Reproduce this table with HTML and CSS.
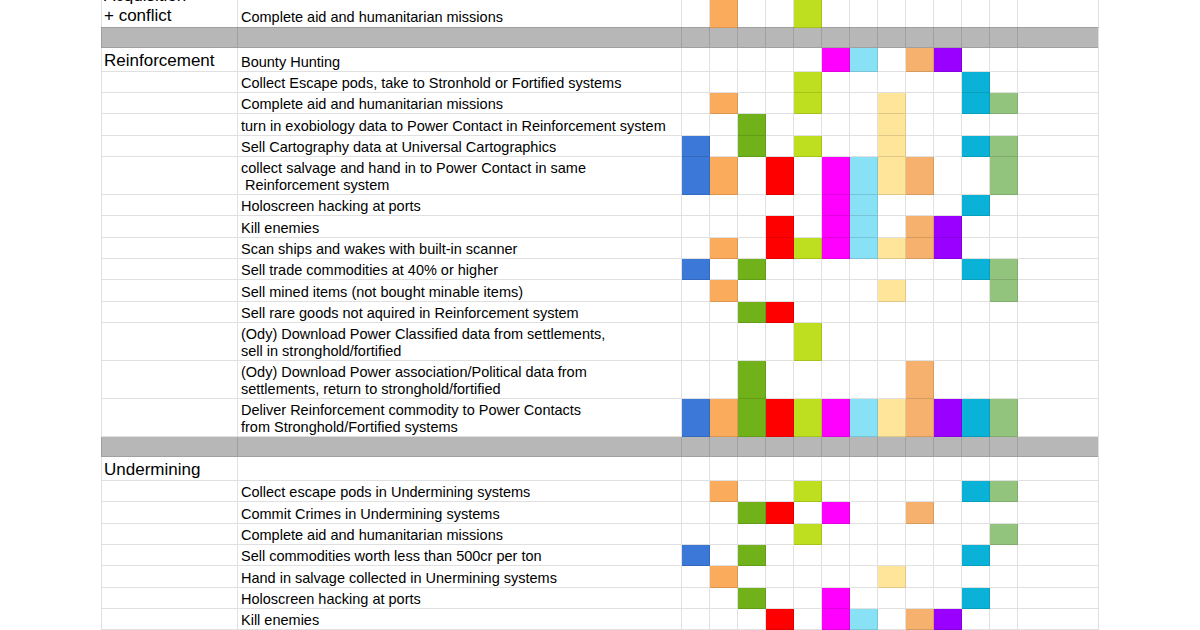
FILE: index.html
```html
<!DOCTYPE html>
<html lang="en">
<head>
<meta charset="utf-8">
<title>Powerplay activities</title>
<link rel="stylesheet" href="styles.css">
</head>
<body>
<div class="sheet">
  <div class="row top"><div class="a"><span>Acquisition<br>+ conflict</span></div><div class="b"><span>Complete aid and humanitarian missions</span></div><i></i><i class="c2"></i><i></i><i></i><i class="c5"></i><i></i><i></i><i></i><i></i><i></i><i></i><i></i><i class="z"></i></div>
  <div class="row gap"><div class="a"></div><div class="b"></div><i></i><i></i><i></i><i></i><i></i><i></i><i></i><i></i><i></i><i></i><i></i><i></i><i class="z"></i></div>

  <div class="row head"><div class="a"><span>Reinforcement</span></div><div class="b"><span>Bounty Hunting</span></div><i></i><i></i><i></i><i></i><i></i><i class="c6"></i><i class="c7"></i><i></i><i class="c9"></i><i class="c10"></i><i></i><i></i><i class="z"></i></div>
  <div class="row"><div class="a"></div><div class="b"><span>Collect Escape pods, take to Stronhold or Fortified systems</span></div><i></i><i></i><i></i><i></i><i class="c5"></i><i></i><i></i><i></i><i></i><i></i><i class="c11"></i><i></i><i class="z"></i></div>
  <div class="row"><div class="a"></div><div class="b"><span>Complete aid and humanitarian missions</span></div><i></i><i class="c2"></i><i></i><i></i><i class="c5"></i><i></i><i></i><i class="c8"></i><i></i><i></i><i class="c11"></i><i class="c12"></i><i class="z"></i></div>
  <div class="row"><div class="a"></div><div class="b"><span>turn in exobiology data to Power Contact in Reinforcement system</span></div><i></i><i></i><i class="c3"></i><i></i><i></i><i></i><i></i><i class="c8"></i><i></i><i></i><i></i><i></i><i class="z"></i></div>
  <div class="row"><div class="a"></div><div class="b"><span>Sell Cartography data at Universal Cartographics</span></div><i class="c1"></i><i></i><i class="c3"></i><i></i><i class="c5"></i><i></i><i></i><i class="c8"></i><i></i><i></i><i class="c11"></i><i class="c12"></i><i class="z"></i></div>
  <div class="row dbl"><div class="a"></div><div class="b"><span>collect salvage and hand in to Power Contact in same<br>&nbsp;Reinforcement system</span></div><i class="c1"></i><i class="c2"></i><i></i><i class="c4"></i><i></i><i class="c6"></i><i class="c7"></i><i class="c8"></i><i class="c9"></i><i></i><i></i><i class="c12"></i><i class="z"></i></div>
  <div class="row"><div class="a"></div><div class="b"><span>Holoscreen hacking at ports</span></div><i></i><i></i><i></i><i></i><i></i><i class="c6"></i><i class="c7"></i><i></i><i></i><i></i><i class="c11"></i><i></i><i class="z"></i></div>
  <div class="row"><div class="a"></div><div class="b"><span>Kill enemies</span></div><i></i><i></i><i></i><i class="c4"></i><i></i><i class="c6"></i><i class="c7"></i><i></i><i class="c9"></i><i class="c10"></i><i></i><i></i><i class="z"></i></div>
  <div class="row"><div class="a"></div><div class="b"><span>Scan ships and wakes with built-in scanner</span></div><i></i><i class="c2"></i><i></i><i class="c4"></i><i class="c5"></i><i class="c6"></i><i class="c7"></i><i class="c8"></i><i class="c9"></i><i class="c10"></i><i></i><i></i><i class="z"></i></div>
  <div class="row"><div class="a"></div><div class="b"><span>Sell trade commodities at 40% or higher</span></div><i class="c1"></i><i></i><i class="c3"></i><i></i><i></i><i></i><i></i><i></i><i></i><i></i><i class="c11"></i><i class="c12"></i><i class="z"></i></div>
  <div class="row"><div class="a"></div><div class="b"><span>Sell mined items (not bought minable items)</span></div><i></i><i class="c2"></i><i></i><i></i><i></i><i></i><i></i><i class="c8"></i><i></i><i></i><i></i><i class="c12"></i><i class="z"></i></div>
  <div class="row"><div class="a"></div><div class="b"><span>Sell rare goods not aquired in Reinforcement system</span></div><i></i><i></i><i class="c3"></i><i class="c4"></i><i></i><i></i><i></i><i></i><i></i><i></i><i></i><i></i><i class="z"></i></div>
  <div class="row dbl"><div class="a"></div><div class="b"><span>(Ody) Download Power Classified data from settlements,<br>sell in stronghold/fortified</span></div><i></i><i></i><i></i><i></i><i class="c5"></i><i></i><i></i><i></i><i></i><i></i><i></i><i></i><i class="z"></i></div>
  <div class="row dbl"><div class="a"></div><div class="b"><span>(Ody) Download Power association/Political data from<br>settlements, return to stronghold/fortified</span></div><i></i><i></i><i class="c3"></i><i></i><i></i><i></i><i></i><i></i><i class="c9"></i><i></i><i></i><i></i><i class="z"></i></div>
  <div class="row dbl"><div class="a"></div><div class="b"><span>Deliver Reinforcement commodity to Power Contacts<br>from Stronghold/Fortified systems</span></div><i class="c1"></i><i class="c2"></i><i class="c3"></i><i class="c4"></i><i class="c5"></i><i class="c6"></i><i class="c7"></i><i class="c8"></i><i class="c9"></i><i class="c10"></i><i class="c11"></i><i class="c12"></i><i class="z"></i></div>
  <div class="row gap gap2"><div class="a"></div><div class="b"></div><i></i><i></i><i></i><i></i><i></i><i></i><i></i><i></i><i></i><i></i><i></i><i></i><i class="z"></i></div>

  <div class="row head"><div class="a"><span>Undermining</span></div><div class="b"></div><i></i><i></i><i></i><i></i><i></i><i></i><i></i><i></i><i></i><i></i><i></i><i></i><i class="z"></i></div>
  <div class="row"><div class="a"></div><div class="b"><span>Collect escape pods in Undermining systems</span></div><i></i><i class="c2"></i><i></i><i></i><i class="c5"></i><i></i><i></i><i></i><i></i><i></i><i class="c11"></i><i class="c12"></i><i class="z"></i></div>
  <div class="row"><div class="a"></div><div class="b"><span>Commit Crimes in Undermining systems</span></div><i></i><i></i><i class="c3"></i><i class="c4"></i><i></i><i class="c6"></i><i></i><i></i><i class="c9"></i><i></i><i></i><i></i><i class="z"></i></div>
  <div class="row"><div class="a"></div><div class="b"><span>Complete aid and humanitarian missions</span></div><i></i><i></i><i></i><i></i><i class="c5"></i><i></i><i></i><i></i><i></i><i></i><i></i><i class="c12"></i><i class="z"></i></div>
  <div class="row"><div class="a"></div><div class="b"><span>Sell commodities worth less than 500cr per ton</span></div><i class="c1"></i><i></i><i class="c3"></i><i></i><i></i><i></i><i></i><i></i><i></i><i></i><i class="c11"></i><i></i><i class="z"></i></div>
  <div class="row"><div class="a"></div><div class="b"><span>Hand in salvage collected in Unermining systems</span></div><i></i><i class="c2"></i><i></i><i></i><i></i><i></i><i></i><i class="c8"></i><i></i><i></i><i></i><i></i><i class="z"></i></div>
  <div class="row"><div class="a"></div><div class="b"><span>Holoscreen hacking at ports</span></div><i></i><i></i><i class="c3"></i><i></i><i></i><i class="c6"></i><i></i><i></i><i></i><i></i><i class="c11"></i><i></i><i class="z"></i></div>
  <div class="row"><div class="a"></div><div class="b"><span>Kill enemies</span></div><i></i><i></i><i></i><i class="c4"></i><i></i><i class="c6"></i><i class="c7"></i><i></i><i class="c9"></i><i class="c10"></i><i></i><i></i><i class="z"></i></div>
</div>
</body>
</html>
```
FILE: styles.css
```css
* { box-sizing: border-box; }
html, body { margin: 0; padding: 0; background: #fff; overflow: hidden; }
body { font-family: "Liberation Sans", Arial, sans-serif; color: #000; }

.sheet { margin: -14px 0 0 101px; width: 997px; }

.row {
  display: grid;
  grid-template-columns: 137px 444px repeat(12, 28px) 81px;
  height: 21.33px;
}
.row.top { height: 41.3px; }
.row.gap { height: 20.7px; background: #b7b7b7; }
.row.gap2 { height: 20px; }
.row.head { height: 23.67px; }
.row.dbl { height: 38.1px; }

.row > * {
  border-right: 1px solid rgba(0, 0, 0, 0.12);
  border-bottom: 1px solid rgba(0, 0, 0, 0.12);
  display: flex;
  align-items: flex-end;
  white-space: nowrap;
  overflow: visible;
}
.row > .a {
  border-left: 1px solid rgba(0, 0, 0, 0.12);
  padding: 0 0 0 2px;
  font-size: 17px;
  line-height: 20px;
}
.row > .b {
  padding: 0 0 0 3px;
  font-size: 14.5px;
  line-height: 17px;
}
.row.top > .a,
.row.top > .b { padding-bottom: 1px; }

.c1 { background: #3c78d8; }
.c2 { background: #fbab5c; }
.c3 { background: #71b21a; }
.c4 { background: #ff0000; }
.c5 { background: #bedf1f; }
.c6 { background: #ff00ff; }
.c7 { background: #88e1f4; }
.c8 { background: #ffe599; }
.c9 { background: #f5b16d; }
.c10 { background: #9900ff; }
.c11 { background: #0ab2d8; }
.c12 { background: #93c47d; }
```
